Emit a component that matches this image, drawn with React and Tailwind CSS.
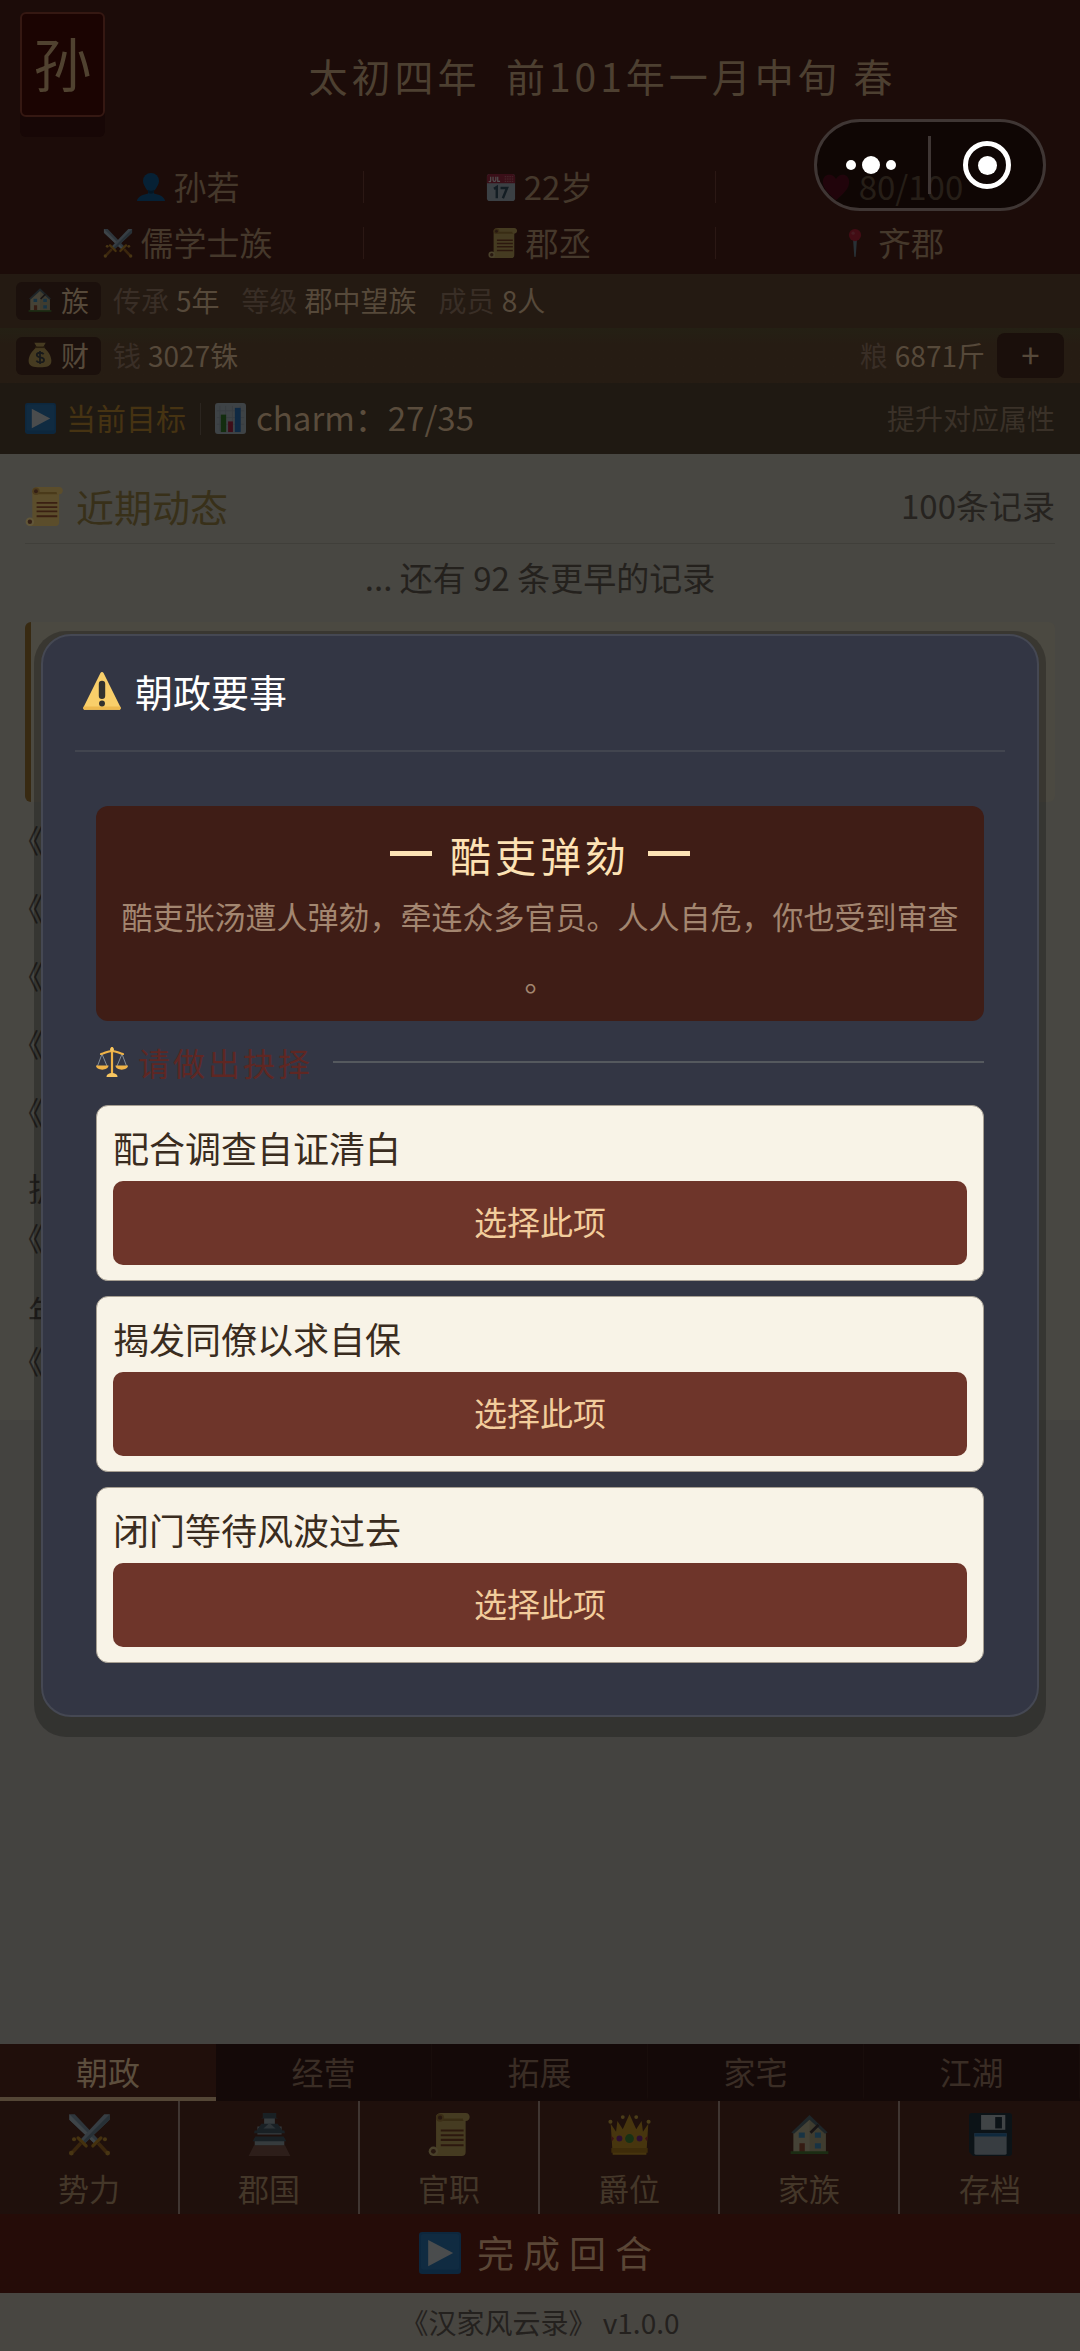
import React from "react";

const dim = "brightness-[0.32]";

function Svg({ className, children, box = "0 0 32 32" }) {
  return (
    <svg viewBox={box} className={"block shrink-0 " + className} aria-hidden="true">
      {children}
    </svg>
  );
}

const Person = (p) => (
  <Svg {...p}>
    <circle cx="16" cy="9.500" r="8.500" fill="#1268a6" />
    <path d="M8 9c0 5 3 10 5 11v3C8 24 2 26 1 31h30c-1-5-7-7-12-8v-3c2-1 5-6 5-11z" fill="#1268a6" />
    <path d="M13 19c2 1.500 4 1.500 6 0v3c-2 1.500-4 1.500-6 0z" fill="#0a4572" />
  </Svg>
);

const Calendar = (p) => (
  <Svg {...p}>
    <rect x="1" y="2" width="30" height="29" rx="3" fill="#b8c8d4" />
    <path d="M1 5a3 3 0 0 1 3-3h24a3 3 0 0 1 3 3v7H1z" fill="#b5304a" />
    <path d="M5 5v4.500c0 1-1.500 1-2 .3M7.500 5v3.500c0 2 3 2 3 0V5M12.500 5v5H15" fill="none" stroke="#fff" strokeWidth="1.200" />
    <path d="M20 5h9M20 7.500h9M20 10h9" stroke="#e58b9a" strokeWidth="1" strokeDasharray="1.500 1" />
    <path d="M8.500 18l3-2v12M15.500 17h7l-4.500 11" fill="none" stroke="#3c5a6e" strokeWidth="2.600" />
  </Svg>
);

const Swords = (p) => (
  <Svg {...p}>
    <path d="M1 1h4l18 19-3 3L1 5z" fill="#8fa9bd" />
    <path d="M1 1l20.500 20.500L20 23 1 5z" fill="#c3d5e0" />
    <path d="M31 1h-4L9 20l3 3L31 5z" fill="#a9c0d0" />
    <path d="M31 1L10.500 21.500 12 23 31 5z" fill="#7b95a8" />
    <path d="M18.500 24.500l6-6M13.500 24.500l-6-6" stroke="#d99a2b" strokeWidth="2.400" strokeLinecap="round" />
    <path d="M22.500 22.500l6 6.500M9.500 22.500l-6 6.500" stroke="#b8762a" strokeWidth="2.600" />
    <circle cx="29.500" cy="29.800" r="1.800" fill="#e0a63a" />
    <circle cx="2.500" cy="29.800" r="1.800" fill="#e0a63a" />
    <circle cx="4.500" cy="19.500" r="1.500" fill="#e0a63a" />
    <circle cx="27.500" cy="19.500" r="1.500" fill="#e0a63a" />
  </Svg>
);

const Scroll = (p) => (
  <Svg {...p}>
    <path d="M6 3c0-2 2-3 4-3h18c4 0 4 6 0 6v23c0 2-1 3-3 3H4V26h2z" fill="#d9b766" />
    <path d="M10 6h18c-2 0-2-1-2-2H10z" fill="#b08b3e" />
    <circle cx="9" cy="3.500" r="3" fill="#b98f45" />
    <circle cx="9" cy="3.500" r="1.600" fill="#7c4a32" />
    <circle cx="4" cy="28.500" r="3.500" fill="#e6cc85" />
    <circle cx="4" cy="28.500" r="1.800" fill="#7c4a32" />
    <path d="M9.500 13h17M9.500 16.500h17M9.500 20h17M9.500 24h17" stroke="#8a4b2c" strokeWidth="1.500" />
  </Svg>
);

const Heart = (p) => (
  <Svg {...p}>
    <path d="M16 30C8 23 2 18 2 10.500 2 2 12 0 16 7.500 20 0 30 2 30 10.500 30 18 24 23 16 30z" fill="#c01a42" />
  </Svg>
);

const Pin = (p) => (
  <Svg {...p}>
    <path d="M14 13h4l-1.200 17a.8.8 0 0 1-1.600 0z" fill="#7d98a8" />
    <circle cx="16" cy="7.500" r="6.500" fill="#d0243f" />
    <circle cx="14" cy="5.500" r="1.800" fill="#dd5468" />
  </Svg>
);

const House = (p) => (
  <Svg {...p}>
    <path d="M4 14L16 3l12 11v15H4z" fill="#d9cfa8" />
    <path d="M16 3l12 11v15H16z" fill="#c4ba94" />
    <path d="M2.500 14.500L16 1.500l13.500 13-2 1L16 5 4.500 15.500z" fill="#5d7681" />
    <path d="M16 14l6-6 1.500 1.500-6 6z" fill="#4b3f42" />
    <path d="M8 14.500h4.500v4H8zM20 14.500h4.500v4H20zM20 22.500h4.500v4H20z" fill="#4c9fd0" />
    <path d="M8.500 22.500h4V29h-4z" fill="#a5563a" />
    <path d="M2 28.500h28v2H2z" fill="#558b3c" />
  </Svg>
);

const MoneyBag = (p) => (
  <Svg {...p}>
    <path d="M9 1h14l-3 5c6 5 10 11 10 17 0 7-6 8-14 8S2 30 2 23C2 17 6 11 12 6z" fill="#dbb968" />
    <path d="M10 6.500h12" stroke="#7c5b2c" strokeWidth="2" />
    <path d="M20.500 15c-1.500-2.500-8.500-2.500-8.500 1 0 4 9 2 9 6 0 4-8 4-9.500.8M16 11v16" fill="none" stroke="#4a4f52" strokeWidth="2.200" />
  </Svg>
);

const Play = (p) => (
  <Svg {...p}>
    <rect width="32" height="32" rx="2.500" fill="#2879c0" />
    <rect x="1.500" y="1.500" width="29" height="27" rx="2" fill="#3186cc" />
    <path d="M7 6l19 10L7 26z" fill="#e6edf2" />
  </Svg>
);

const Chart = (p) => (
  <Svg {...p}>
    <rect width="32" height="32" rx="3" fill="#c3d0da" />
    <path d="M5 3v26M11 3v26M18 3v26M26 3v26M2 8h28M2 15h28M2 22h28" stroke="#aebdc9" strokeWidth="1" />
    <rect x="6" y="12" width="5.500" height="18" fill="#3c8d2f" />
    <rect x="13.500" y="19" width="5" height="11" fill="#c2294c" />
    <rect x="20.500" y="5" width="6" height="25" fill="#2f7fd0" />
  </Svg>
);

const Warning = (p) => (
  <Svg {...p}>
    <path d="M14.700.8a1.500 1.500 0 0 1 2.600 0l14.300 28.800a1.500 1.500 0 0 1-1.300 2.200H1.700a1.500 1.500 0 0 1-1.300-2.200z" fill="#f9cf6a" />
    <path d="M.4 29.600a1.500 1.500 0 0 0 1.300 2.200h28.600a1.500 1.500 0 0 0 1.300-2.200l-.3-.6H.7z" fill="#eeb94e" />
    <path d="M13.300 10a2.700 2.700 0 0 1 5.400 0v10a2.700 2.700 0 0 1-5.400 0z" fill="#33322e" />
    <circle cx="16" cy="26.500" r="2.500" fill="#33322e" />
  </Svg>
);

const Scales = (p) => (
  <Svg {...p}>
    <path d="M6 8L1.500 20M6 8l5 12M26 8l-5 12M26 8l4.500 12" stroke="#8c99a3" strokeWidth=".9" fill="none" />
    <path d="M5 8c4-.5 6-3 11-3s7 2.500 11 3" fill="none" stroke="#f0b347" strokeWidth="2.200" strokeLinecap="round" />
    <path d="M16 1v27" stroke="#f0b347" strokeWidth="2.200" />
    <circle cx="16" cy="3.500" r="2" fill="#f7c661" />
    <path d="M0 19.500h12.500c0 5.500-12.500 5.500-12.500 0zM19.500 19.500H32c0 5.500-12.500 5.500-12.500 0z" fill="#f0b347" />
    <path d="M10.500 31c0-3 3-4 5.500-4s5.500 1 5.500 4z" fill="#f7c661" />
  </Svg>
);

const Castle = (p) => (
  <Svg {...p}>
    <path d="M4.500 24h23l4 8h-31z" fill="#8d5f52" />
    <path d="M12 3h8v6h-8zM7 10h18v6H7zM5 19h22v5H5z" fill="#a9b7c0" />
    <path d="M11 0h10v3.500l1.500.5H9.500L11 3.500zM10 8h12l4 5.500H6zM5 13h22l.5 2H4.500zM5.500 17.500h21l2 3.500h-25z" fill="#4d6370" />
    <path d="M16 7.500l4.500 4h-9z" fill="#8fa2ad" />
  </Svg>
);

const Crown = (p) => (
  <Svg {...p}>
    <path d="M2 8l4 6 1-8 4 6 5-11 5 11 4-6 1 8 4-6-1.500 23h-25z" fill="#dda62c" />
    <path d="M2.500 26h27v3.500h-27z" fill="#c28a1e" />
    <circle cx="1.800" cy="6.500" r="1.500" fill="#eabf4d" />
    <circle cx="30.200" cy="6.500" r="1.500" fill="#eabf4d" />
    <circle cx="11" cy="3" r="1.400" fill="#eabf4d" />
    <circle cx="21" cy="3" r="1.400" fill="#eabf4d" />
    <circle cx="16" cy="19" r="3.300" fill="#4a9a3f" />
    <circle cx="8.500" cy="19" r="2.200" fill="#8e2f9a" />
    <circle cx="23.500" cy="19" r="2.200" fill="#8e2f9a" />
    <path d="M2.500 17l2 2-1.500 2zM29.500 17l-2 2 1.500 2z" fill="#c03a3a" />
  </Svg>
);

const Floppy = (p) => (
  <Svg {...p}>
    <path d="M0 2a2 2 0 0 1 2-2h28a2 2 0 0 1 2 2v28a2 2 0 0 1-2 2H3l-3-3z" fill="#263a48" />
    <path d="M9 1.500h18v11H9z" fill="#c8d3dc" />
    <path d="M19.500 3h5v8.500h-5z" fill="#263a48" />
    <path d="M4 15h24v15a1 1 0 0 1-1 1H5a1 1 0 0 1-1-1z" fill="#aebfcc" />
    <path d="M4 15h24v2.500H4z" fill="#2f7fc0" />
  </Svg>
);

function InfoCell({ Icon, text, last }) {
  return (
    <div className="flex h-14 items-center">
      <div className="flex flex-1 items-center justify-center gap-2">
        <Icon className={"size-[30px] " + dim} />
        <span>{text}</span>
      </div>
      {!last && <span className="h-8 w-px bg-[#2b1814]" />}
    </div>
  );
}

function Badge({ Icon, text }) {
  return (
    <span className="mr-3 flex h-[38px] items-center gap-2 rounded-md bg-[#1b100c] pr-3 pl-[11px] pb-0.5 text-[#56493a]">
      <Icon className={"size-[26px] " + dim} />
      {text}
    </span>
  );
}

function Stat({ label, value }) {
  return (
    <span className="flex gap-[7px] pb-0.5">
      <span className="text-[#392e26]">{label}</span>
      <span className="text-[#56493a]">{value}</span>
    </span>
  );
}

const info = [
  [Person, "孙若"],
  [Calendar, "22岁"],
  [Heart, "80/100"],
  [Swords, "儒学士族"],
  [Scroll, "郡丞"],
  [Pin, "齐郡"],
];

const tabs = ["朝政", "经营", "拓展", "家宅", "江湖"];

const menu = [
  [Swords, "势力"],
  [Castle, "郡国"],
  [Scroll, "官职"],
  [Crown, "爵位"],
  [House, "家族"],
  [Floppy, "存档"],
];

const options = ["配合调查自证清白", "揭发同僚以求自保", "闭门等待风波过去"];

function Capsule() {
  return (
    <div className="absolute top-[119px] right-[34px] z-20 flex h-[92px] w-[232px] items-center rounded-full border-3 border-[#3f3634] bg-black/45">
      <button aria-label="更多" className="flex w-[111px] items-center justify-center gap-1.5 pr-1">
        <span className="size-2.5 rounded-full bg-white" />
        <span className="size-[18px] rounded-full bg-white" />
        <span className="size-2.5 rounded-full bg-white" />
      </button>
      <span className="h-[58px] w-[3px] bg-[#3f3634]" />
      <button aria-label="关闭" className="flex flex-1 items-center justify-center">
        <span className="flex size-12 items-center justify-center rounded-full border-5 border-white">
          <span className="size-[19px] rounded-full bg-white" />
        </span>
      </button>
    </div>
  );
}

function Dialog() {
  return (
    <div className="absolute inset-0 z-10 flex items-center px-[34px] pt-4">
      <div className="w-full rounded-[32px] bg-black/24 px-[7px] pt-[3px] pb-5">
        <section role="dialog" aria-labelledby="dialog-title" className="rounded-[30px] border-2 border-[#454853] bg-[#333644] px-8 pb-[52px]">
          <header className="flex h-[116px] items-center gap-3.5 border-b-2 border-[#42454f] px-2 pb-1">
            <Warning className="size-[38px]" />
            <h2 id="dialog-title" className="text-[38px] leading-[60px] text-white">朝政要事</h2>
          </header>
          <div className="px-[21px] pt-[54px]">
            <div className="rounded-xl bg-[#3f1d16] px-6 pt-[17px] pb-3 text-center">
              <div className="flex items-center justify-center gap-[18px] text-[#fde2b4]">
                <span className="h-[5px] w-[42px] bg-[#fde2b4]" />
                <h3 className="text-[41px] leading-[62px] tracking-[4px]">酷吏弹劾</h3>
                <span className="h-[5px] w-[42px] bg-[#fde2b4]" />
              </div>
              <p className="text-[31px] leading-[62px] text-[#a38670] [line-break:anywhere]">
                酷吏张汤遭人弹劾，牵连众多官员。人人自危，你也受到审查。
              </p>
            </div>
            <div className="flex h-[84px] items-center pb-0.5 text-[32px] tracking-[3px] text-[#5f2723]">
              <Scales className="mr-2.5 size-8" />
              请做出抉择
              <span className="ml-5 h-0.5 flex-1 bg-[#55595e]" />
            </div>
            <ul className="flex flex-col gap-[15px]">
              {options.map((o, i) => (
                <li key={o} className="rounded-xl border border-[#a79f92] bg-[#f8f3e7] px-4 pt-[11px] pb-[15px]">
                  <div id={"option-" + i} className="mb-1 text-[36px] leading-[60px] text-[#3a2c20]">{o}</div>
                  <button aria-describedby={"option-" + i} className="h-[84px] w-full rounded-[10px] bg-[#6e352a] pb-0.5 text-[33px] text-[#f2cd9c]">
                    选择此项
                  </button>
                </li>
              ))}
            </ul>
          </div>
        </section>
      </div>
    </div>
  );
}

export default function App() {
  return (
    <div className="relative flex min-h-screen flex-col overflow-hidden bg-[#444340] font-['Noto_Sans_CJK_SC','Noto_Sans',sans-serif] text-[28px]">
      <header className="bg-[#1c0c09] pt-3 pb-[3px]">
        <div className="flex h-[126px] items-center gap-10 px-5">
          <div className="flex h-[105px] w-[85px] items-center justify-center self-start rounded-md border-2 border-[#351812] bg-[#1b0402] pb-1 text-[58px] text-[#504230] shadow-[0_20px_0_#170706]">
            孙
          </div>
          <h1 className="flex-1 text-center text-[39px] leading-[60px] tracking-[4px] whitespace-pre text-[#4d4031]">
            太初四年  前101年一月中旬 春
          </h1>
        </div>
        <div className="mt-[21px] grid grid-cols-3 px-3 text-[33px] text-[#45382b]">
          {info.map(([Icon, text], i) => (
            <InfoCell key={text} Icon={Icon} text={text} last={i % 3 === 2} />
          ))}
        </div>
      </header>

      <div className="flex h-[54px] items-center bg-[#241a12] px-4">
        <Badge Icon={House} text="族" />
        <div className="flex gap-[22px]">
          <Stat label="传承" value="5年" />
          <Stat label="等级" value="郡中望族" />
          <Stat label="成员" value="8人" />
        </div>
      </div>
      <div className="flex h-[55px] items-center bg-linear-to-b from-[#242014] to-[#261c13] to-30% px-4">
        <Badge Icon={MoneyBag} text="财" />
        <Stat label="钱" value="3027铢" />
        <div className="ml-auto flex items-center gap-3">
          <Stat label="粮" value="6871斤" />
          <button aria-label="增加" className="flex h-[45px] w-[67px] items-center justify-center rounded-lg bg-[#1a0f0b] pb-0.5 text-[33px] text-[#56493a]">
            +
          </button>
        </div>
      </div>
      <div className="flex h-[71px] items-center bg-[#1f1912] px-[25px]">
        <Play className={"mr-2.5 size-[31px] " + dim} />
        <span className="pb-0.5 text-[30px] text-[#463312]">当前目标</span>
        <span className="mx-3.5 h-8 w-px bg-[#2b251f]" />
        <Chart className={"mr-2.5 size-[31px] " + dim} />
        <span className="pb-0.5 text-[33px] text-[#5a4c3c]">charm：27/35</span>
        <span className="ml-auto pb-0.5 text-[#3a3128]">提升对应属性</span>
      </div>

      <main className="h-[966px] bg-[#484742] px-[25px] pt-[17px]">
        <div className="flex h-[73px] items-center justify-between border-b border-[#403f3a] pb-0.5">
          <h2 className="flex items-center gap-3 text-[38px] leading-[60px] text-[#383019]">
            <Scroll className="size-[39px] brightness-[0.42]" />
            近期动态
          </h2>
          <span className="text-[33px] text-[#26231f]">100条记录</span>
        </div>
        <p className="h-[78px] text-center text-[33px] leading-[66px] text-[#24211d]">... 还有 92 条更早的记录</p>
        <div className="h-[180px] rounded-md border-l-6 border-[#382a12] bg-[#4b4941]" />
        <ul className="pt-3 pl-[3px] text-[32px] leading-[50px] text-[#24221f] [text-spacing-trim:trim-start]">
          {[0, 1, 2, 3, 4].map((n) => (
            <li key={n} className="h-[68px]">《</li>
          ))}
          <li className="h-[123px] pt-2">扩<br />《</li>
          <li className="h-[123px] pt-2">年<br />《</li>
        </ul>
      </main>

      <div className="flex-1 bg-[#444340]" />

      <footer>
        <div role="tablist" className="grid h-[57px] grid-cols-5 text-[32px]">
          {tabs.map((t, i) => (
            <button
              key={t}
              role="tab"
              aria-selected={i === 0}
              className={
                i === 0
                  ? "border-b-4 border-[#544636] bg-[#200f0b] leading-none text-[#5c4e3d]"
                  : "border-r border-b-4 border-r-[#180d0b] border-b-[#140908] bg-[#140908] leading-none text-[#3a2d25]"
              }
            >
              {t}
            </button>
          ))}
        </div>
        <nav className="grid h-[113px] grid-cols-6 bg-[#1f100c] text-[31px] text-[#443729]">
          {menu.map(([Icon, t], i) => (
            <button key={t} className={"flex flex-col items-center gap-3 pt-3 leading-10 " + (i < 5 ? "border-r-2 border-[#3f3531]" : "")}>
              <Icon className={"size-[43px] " + dim} />
              {t}
            </button>
          ))}
        </nav>
        <button className="flex h-[79px] w-full items-center justify-center gap-4 bg-[#250c08] pb-0.5 text-[37px] tracking-[9px] text-[#5a4636]">
          <Play className={"size-[42px] " + dim} />
          完成回合
        </button>
        <p className="h-[58px] bg-[#484641] text-center leading-[58px] text-[#24211e]">《汉家风云录》 v1.0.0</p>
      </footer>

      <Dialog />
      <Capsule />
    </div>
  );
}
